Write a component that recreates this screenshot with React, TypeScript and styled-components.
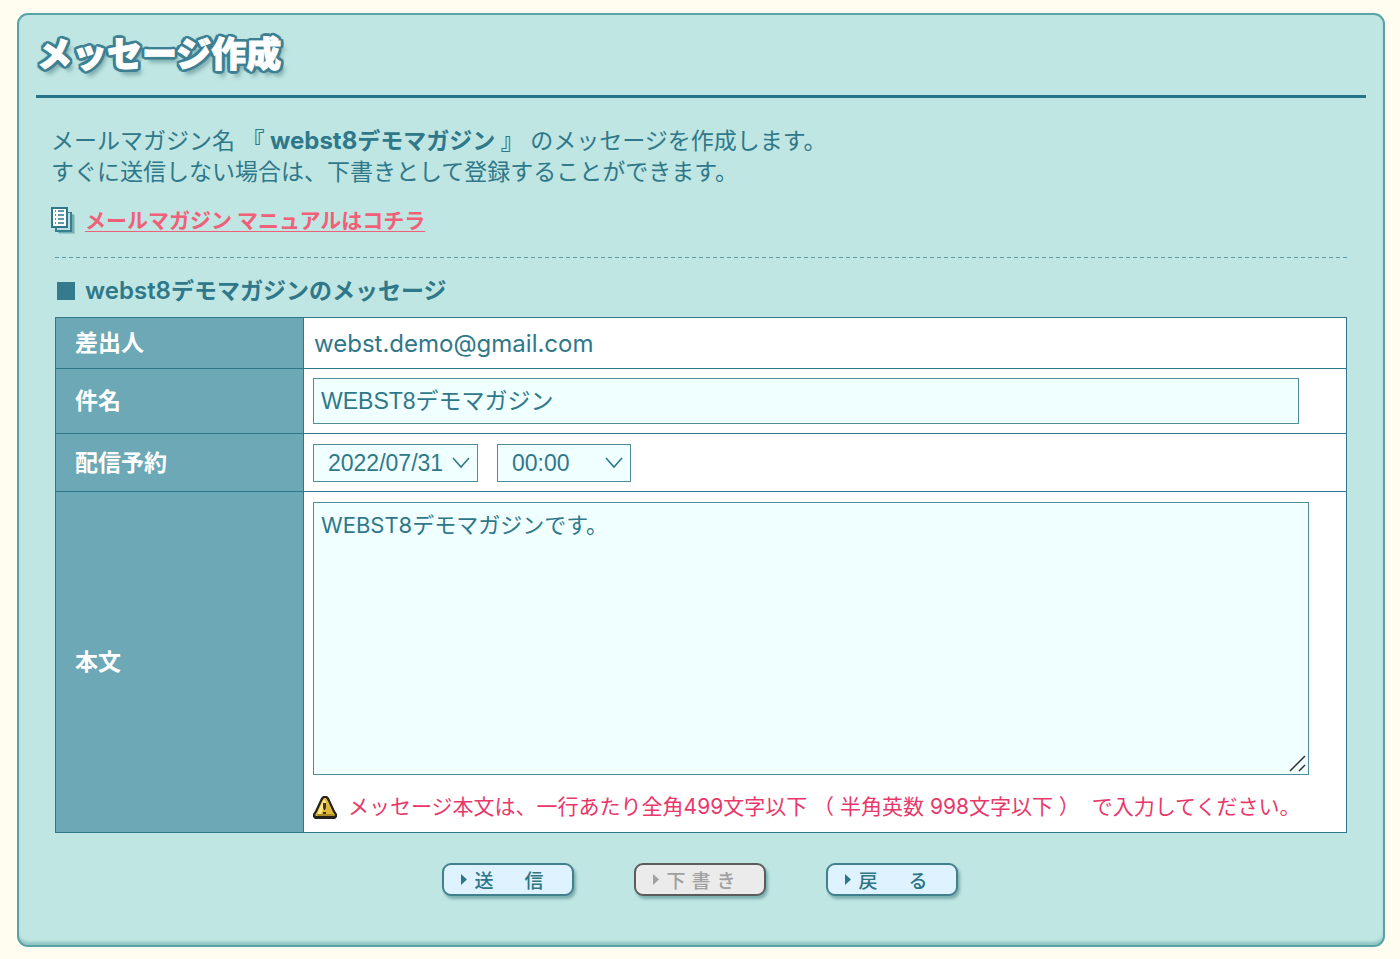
import React from "react";
import styled, { createGlobalStyle } from "styled-components";

const teal = "#2f788a";
const outline = "#3d8093";
const jp = `"Noto Sans CJK JP", sans-serif`;
const uiFont = `Inter, ${jp}`;
const fieldFont = `"Liberation Sans", ${jp}`;

const GlobalStyle = createGlobalStyle`
  *, *::before, *::after { box-sizing: border-box; }
  body {
    margin: 0;
    background: #fffdf0;
    color: ${teal};
    font-family: ${uiFont};
    font-size: 23px;
  }
`;

const Page = styled.main`
  padding: 13px 15px 12px 17px;
`;

const Panel = styled.section`
  padding: 17px 17px 49px;
  background: #bfe6e2;
  border: 2px solid #57a3a6;
  border-radius: 11px;
  box-shadow: inset 0 -4px 3px -1px #8fc4c3;
`;

const Header = styled.header`
  padding: 2px 0 25px;
  border-bottom: 3px solid #25748a;
`;

const Title = styled.h1`
  margin: 0;
  padding-left: 1px;
  font-family: ${jp};
  font-size: 35px;
  font-weight: 900;
  line-height: 36px;
  color: #fff;
  -webkit-text-stroke: 1px #fff;
  text-shadow:
    3px 0 0 ${outline}, -3px 0 0 ${outline}, 0 3px 0 ${outline}, 0 -3px 0 ${outline},
    2px 2px 0 ${outline}, -2px 2px 0 ${outline}, 2px -2px 0 ${outline}, -2px -2px 0 ${outline},
    3px 1px 0 ${outline}, -3px 1px 0 ${outline}, 3px -1px 0 ${outline}, -3px -1px 0 ${outline},
    1px 3px 0 ${outline}, -1px 3px 0 ${outline}, 1px -3px 0 ${outline}, -1px -3px 0 ${outline},
    3px 2px 1px ${outline}, -3px 2px 1px ${outline}, 3px -2px 1px ${outline}, -3px -2px 1px ${outline},
    4px 6px 4px rgba(60, 110, 120, 0.5);
`;

const Content = styled.div`
  padding: 28px 19px 0;
`;

const Intro = styled.p`
  margin: 0 0 18px -4px;
  line-height: 31px;
`;

const Latin = styled.span`
  font-size: 24px;
  line-height: 1;
`;

const ManualRow = styled.div`
  display: flex;
  align-items: center;
  gap: 10px;
  height: 51px;
  margin-left: -5px;
  padding-bottom: 21px;
`;

const ManualLink = styled.a`
  color: #f25f78;
  font-size: 21px;
  font-weight: 700;
  line-height: 30px;
  text-decoration: underline;
  text-decoration-thickness: 1px;
  text-underline-offset: 3px;
`;

const Divider = styled.hr`
  height: 1px;
  margin: 0;
  border: 0;
  background: repeating-linear-gradient(90deg, #5c9aa6 0 4px, transparent 4px 7px);
`;

const SectionTitle = styled.h2`
  display: flex;
  align-items: center;
  gap: 10px;
  margin: 18px 0 11px;
  padding-left: 2px;
  font-size: 23px;
  font-weight: 600;
  line-height: 30px;

  &::before {
    content: "";
    width: 18px;
    height: 18px;
    background: #367a8d;
  }
`;

const FormTable = styled.table`
  width: 100%;
  border-collapse: collapse;
  table-layout: fixed;
`;

const Row = styled.tr<{ $height: number }>`
  height: ${(p) => p.$height}px;
`;

const Label = styled.th`
  width: 248px;
  padding: 0 19px 4px;
  border: 1px solid ${teal};
  background: #6ca8b6;
  color: #fff;
  font-weight: 700;
  text-align: left;
`;

const Value = styled.td`
  padding: 0 9px;
  border: 1px solid ${teal};
  background: #fff;
`;

const Sender = styled.span`
  padding-left: 1px;
  font-size: 24px;
`;

const fieldBox = `
  border: 1px solid #4f8d9b;
  border-radius: 0;
  outline: none;
  background: #f0ffff;
  color: ${teal};
`;

const TextInput = styled.input`
  ${fieldBox}
  display: block;
  width: calc(100% - 38px);
  height: 46px;
  padding: 0 7px 5px;
  font: 23px ${fieldFont};
`;

const SelectGroup = styled.div`
  display: flex;
  gap: 19px;
`;

const SelectBox = styled.div<{ $width: number }>`
  position: relative;
  width: ${(p) => p.$width}px;

  svg {
    position: absolute;
    top: 13px;
    right: 7px;
    pointer-events: none;
  }
`;

const Select = styled.select`
  ${fieldBox}
  appearance: none;
  display: block;
  width: 100%;
  height: 38px;
  padding: 0 14px;
  font: 23px ${fieldFont};
`;

const BodyBox = styled.div`
  position: relative;
  width: calc(100% - 28px);
  margin-top: 10px;

  svg {
    position: absolute;
    right: 3px;
    bottom: 3px;
    pointer-events: none;
  }
`;

const TextArea = styled.textarea`
  ${fieldBox}
  display: block;
  width: 100%;
  height: 273px;
  padding: 7px;
  resize: none;
  font: 22px/31px ${uiFont};
`;

const Warning = styled.p`
  display: flex;
  align-items: center;
  gap: 11px;
  margin: 17px 0 10px;
  color: #e8386b;
  font-size: 21px;
  line-height: 30px;
`;

const Actions = styled.div`
  display: flex;
  justify-content: center;
  gap: 60px;
  margin-top: 30px;
  padding-right: 3px;
`;

const ActionButton = styled.button`
  display: flex;
  align-items: center;
  gap: 8px;
  width: 132px;
  height: 33px;
  padding: 0 0 0 16px;
  border: 2px solid #40808f;
  border-radius: 9px;
  background: #def3ff;
  box-shadow: 2px 3px 3px rgba(60, 120, 130, 0.5);
  color: #2f7585;
  font: 500 19px/28px ${jp};

  &:disabled {
    border-color: #5c5c5c;
    background: #ebebeb;
    color: #a0a0a0;
  }
`;

const ButtonText = styled.span`
  display: flex;
  justify-content: space-between;
  width: 69px;
`;

const PagesIcon = () => (
  <svg width="25" height="30" viewBox="0 0 25 30" aria-hidden="true">
    <path d="M9 9h16v19H9z" fill="#4f919c" opacity=".35" />
    <path d="M8 8h16v19H8z" fill="#4f919c" opacity=".5" />
    <path d="M5 6h17v20H5z" fill="#3a7f90" />
    <path d="M7 7h13v17H7z" fill="#b9dde2" />
    <path d="M1 1h17v21H1z" fill="#2f788a" />
    <path d="M3 3h13v17H3z" fill="#fff" />
    <path d="M5 5h1M8 5h6M5 9h1M8 9h6M5 13h1M8 13h6M5 17h1M8 17h6" stroke="#2f788a" strokeWidth="1.500" />
  </svg>
);

const WarningIcon = () => (
  <svg width="24" height="24" viewBox="0 0 24 24" aria-hidden="true">
    <path d="M10 1h4l2 2 6 13 2 3v3l-2 2H2l-2-2v-3l2-3L8 3z" fill="#24231c" />
    <path d="M11 3h2l2 3 5 11 2 3-1 1H3l-1-1 2-3L9 6z" fill="#e0b93c" />
    <path d="M11 4L9 8 4 19h4l5-12z" fill="#ffe985" />
    <path d="M15 8l5 11H4v2h17z" fill="#b08d25" />
    <path d="M10 8h3v5l-1 2h-1l-1-2zM10 17h3v2h-3z" fill="#3a3730" />
  </svg>
);

const Chevron = () => (
  <svg width="20" height="13" viewBox="0 0 20 13" aria-hidden="true">
    <path d="M2 1l8 9 8-9" fill="none" stroke="#2f788a" strokeWidth="1.6" />
  </svg>
);

const ResizeGrip = () => (
  <svg width="17" height="17" viewBox="0 0 17 17" aria-hidden="true">
    <path d="M1 16L16 1M10 16l6-6" stroke="#333" strokeWidth="1.5" />
  </svg>
);

const Triangle = () => (
  <svg width="7" height="11" viewBox="0 0 7 11" aria-hidden="true">
    <path d="M1 0l6 5.500-6 5.500z" fill="currentColor" />
  </svg>
);

function Action({ text, disabled }: { text: string; disabled?: boolean }) {
  return (
    <ActionButton type="button" disabled={disabled} aria-label={text}>
      <Triangle />
      <ButtonText>
        {[...text].map((c) => (
          <span key={c}>{c}</span>
        ))}
      </ButtonText>
    </ActionButton>
  );
}

export default function App() {
  return (
    <Page>
      <GlobalStyle />
      <Panel>
        <Header>
          <Title>メッセージ作成</Title>
        </Header>
        <Content>
          <Intro>
            メールマガジン名{" "}
            <strong>
              『 <Latin>webst8</Latin>デモマガジン 』
            </strong>{" "}
            のメッセージを作成します。
            <br />
            すぐに送信しない場合は、下書きとして登録することができます。
          </Intro>
          <ManualRow>
            <PagesIcon />
            <ManualLink href="#manual">メールマガジン マニュアルはコチラ</ManualLink>
          </ManualRow>
          <Divider />
          <SectionTitle>
            <span>
              <Latin>webst8</Latin>デモマガジンのメッセージ
            </span>
          </SectionTitle>
          <form onSubmit={(e) => e.preventDefault()}>
            <FormTable>
              <tbody>
                <Row $height={51}>
                  <Label scope="row">差出人</Label>
                  <Value>
                    <Sender>webst.demo@gmail.com</Sender>
                  </Value>
                </Row>
                <Row $height={65}>
                  <Label scope="row">
                    <label htmlFor="subject">件名</label>
                  </Label>
                  <Value>
                    <TextInput id="subject" type="text" defaultValue="WEBST8デモマガジン" />
                  </Value>
                </Row>
                <Row $height={58}>
                  <Label scope="row">
                    <label htmlFor="date">配信予約</label>
                  </Label>
                  <Value>
                    <SelectGroup>
                      <SelectBox $width={165}>
                        <Select id="date">
                          <option>2022/07/31</option>
                        </Select>
                        <Chevron />
                      </SelectBox>
                      <SelectBox $width={134}>
                        <Select aria-label="配信時刻">
                          <option>00:00</option>
                        </Select>
                        <Chevron />
                      </SelectBox>
                    </SelectGroup>
                  </Value>
                </Row>
                <Row $height={341}>
                  <Label scope="row">
                    <label htmlFor="body">本文</label>
                  </Label>
                  <Value>
                    <BodyBox>
                      <TextArea id="body" defaultValue="WEBST8デモマガジンです。" />
                      <ResizeGrip />
                    </BodyBox>
                    <Warning>
                      <WarningIcon />
                      <span>
                        メッセージ本文は、一行あたり全角499文字以下 （ 半角英数 998文字以下 ）&nbsp; で入力してください。
                      </span>
                    </Warning>
                  </Value>
                </Row>
              </tbody>
            </FormTable>
            <Actions>
              <Action text="送信" />
              <Action text="下書き" disabled />
              <Action text="戻る" />
            </Actions>
          </form>
        </Content>
      </Panel>
    </Page>
  );
}
